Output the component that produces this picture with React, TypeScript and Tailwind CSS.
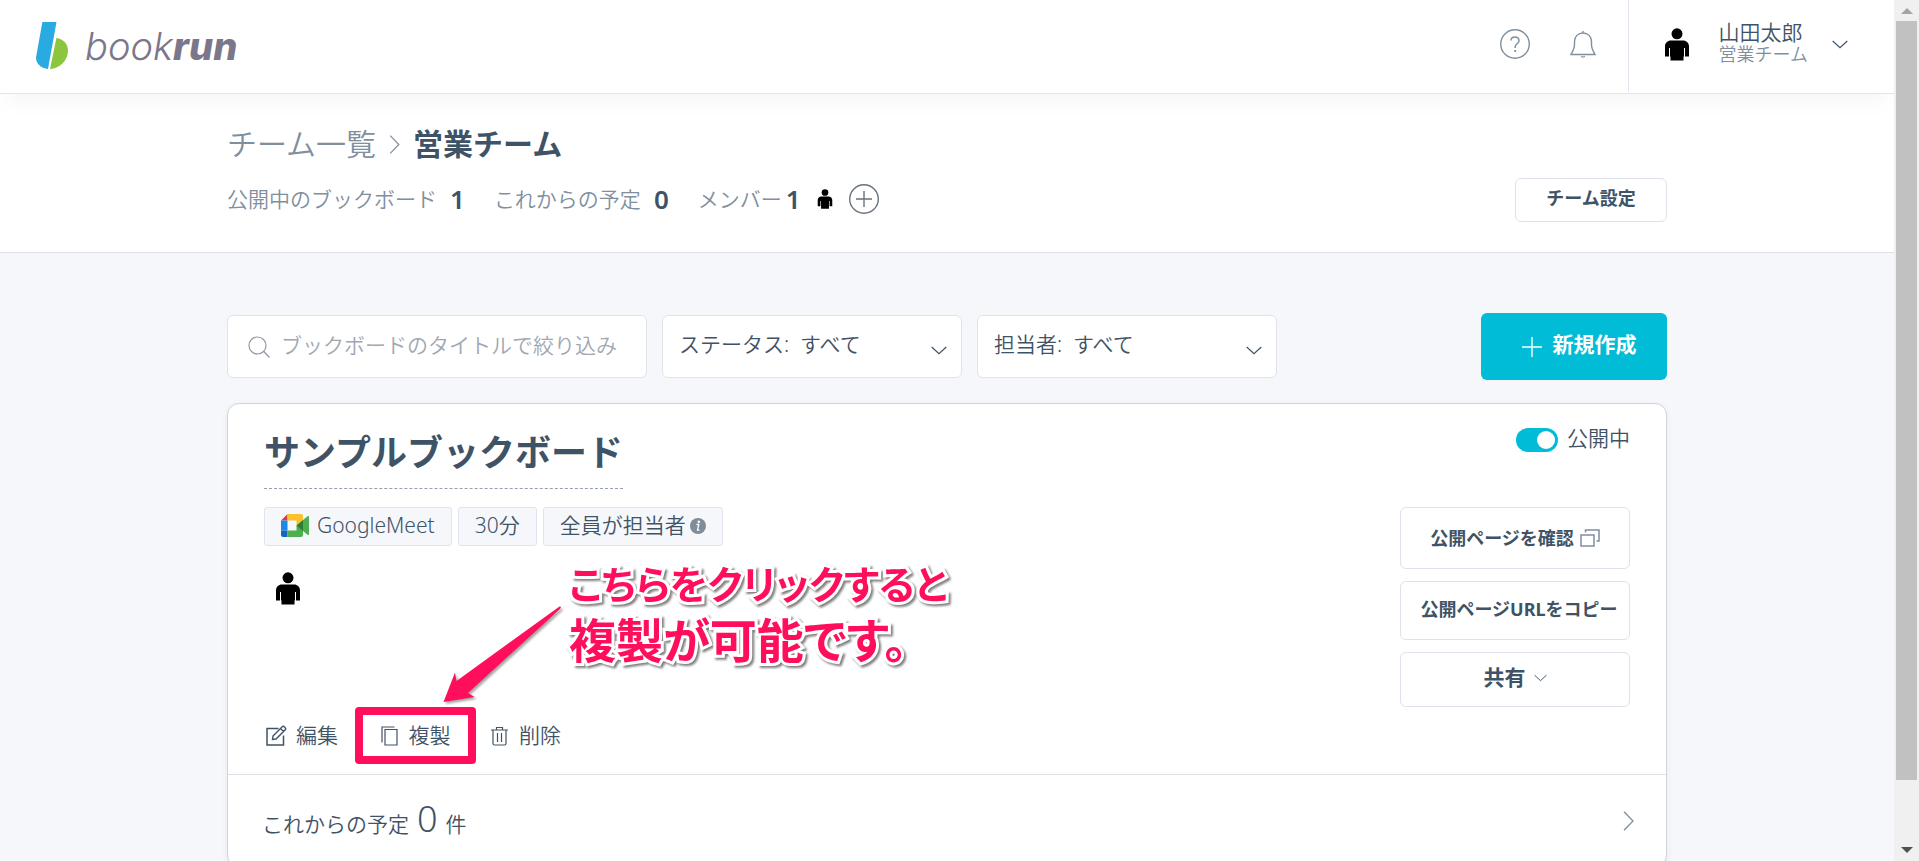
import type { ReactNode } from 'react';

type IconProps = { className?: string };

function Icon({ className = '', viewBox = '0 0 24 24', children }: IconProps & { viewBox?: string; children: ReactNode }) {
  return (
    <svg className={`shrink-0 ${className}`} viewBox={viewBox} fill="none" stroke="currentColor" aria-hidden="true">
      {children}
    </svg>
  );
}

function LogoMark() {
  return (
    <svg className="h-[48px] w-[33px]" viewBox="0 0 33 48" aria-hidden="true">
      <path d="M6.400 0H20.500L12 47C5 46.500 0 41.500 0 35.500Z" fill="#29abe2" />
      <path d="M20.400 16C27.500 17 32 22 32 28.500C32 38.500 24 46.500 14 47Z" fill="#8cc63f" />
    </svg>
  );
}

function PersonIcon({ className = '' }: IconProps) {
  return (
    <svg className={`shrink-0 ${className}`} viewBox="0 0 24 33" fill="#000" aria-hidden="true">
      <circle cx="12" cy="5.800" r="5.500" />
      <path d="M6 12.500H18C21.500 12.500 24 15 24 18.500V28.500H20V20H19V28.500H18.500V32.500H5.500V28.500H5V20H4V28.500H0V18.500C0 15 2.500 12.500 6 12.500Z" />
    </svg>
  );
}

function HelpIcon() {
  return (
    <Icon className="h-[30px] w-[30px]" viewBox="0 0 30 30">
      <circle cx="15" cy="15" r="14.300" strokeWidth="1.400" />
      <path d="M11 11.500C11 9.500 12.700 8 15 8S19 9.500 19 11.800C19 14.800 15.200 14.800 15.200 18V19" strokeWidth="1.500" />
      <path d="M15.200 21V23" strokeWidth="1.800" />
    </Icon>
  );
}

function BellIcon() {
  return (
    <Icon className="h-[28px] w-[26px]" viewBox="0 0 26 28">
      <path d="M13 1V3.500M4.500 15V11.500C4.500 6.500 8 3 13 3S21.500 6.500 21.500 11.500V15C21.500 19 22.800 20 25 24.500H1C3.200 20 4.500 19 4.500 15Z" strokeWidth="1.400" />
      <path d="M11.500 26C11.500 27.500 14.500 27.500 14.500 26" strokeWidth="1.200" />
    </Icon>
  );
}

function ChevronDown({ className = '' }: IconProps) {
  return (
    <Icon className={className} viewBox="0 0 16 9">
      <path d="M0.700 1L8 7.800L15.300 1" strokeWidth="1.200" />
    </Icon>
  );
}

function ChevronRight({ className = '' }: IconProps) {
  return (
    <Icon className={className} viewBox="0 0 11 20">
      <path d="M1 0.700L10 10L1 19.300" strokeWidth="1.300" />
    </Icon>
  );
}

function MeetIcon() {
  return (
    <svg className="h-[23px] w-[28px]" viewBox="0 0 28 23" aria-hidden="true">
      <path d="M0 6.500L6.500 0V6.500Z" fill="#e53935" />
      <path d="M0 6.500H6.500V16.500H0Z" fill="#1e88e5" />
      <path d="M0 16.500H6.500V23H2C1 23 0 22 0 21Z" fill="#1565c0" />
      <path d="M6.500 0H20C21.200 0 22 0.800 22 2V7.500L15.500 12V6.500H6.500Z" fill="#fbc02d" />
      <path d="M6.500 16.500H15.500V11.500L22 15V21C22 22.200 21.200 23 20 23H6.500Z" fill="#4caf50" />
      <path d="M15.500 11.500L22 6V17Z" fill="#2e7d32" />
      <path d="M22 6L26.500 2.300C27.200 1.800 28 2 28 2.800V20.200C28 21 27.200 21.200 26.500 20.700L22 17Z" fill="#4caf50" />
    </svg>
  );
}

function Header() {
  return (
    <header className="relative z-10 flex h-[94px] shrink-0 justify-between border-b border-[#e4e4ee] bg-white shadow-[0_16px_20px_-8px_rgba(0,0,0,0.04)]">
      <a href="#" className="flex items-center gap-4 pb-[2px] pl-9 text-[#7b778a]">
        <LogoMark />
        <span className="font-[Inter,sans-serif] text-[38px] leading-none italic">
          <span className="font-light">book</span>
          <span className="font-extrabold">run</span>
        </span>
      </a>
      <div className="flex h-[92px] text-[#7f8f9e]">
        <div className="flex items-center gap-10 pr-8 pb-1">
          <button type="button" aria-label="ヘルプ">
            <HelpIcon />
          </button>
          <button type="button" aria-label="お知らせ">
            <BellIcon />
          </button>
        </div>
        <button type="button" className="flex items-center gap-[30px] border-l border-[#e4e4ee] pr-[46px] pb-1 pl-9 text-left">
          <PersonIcon className="h-[33px] w-[24px]" />
          <span className="flex items-center gap-6">
            <span className="flex flex-col pb-1">
              <span className="text-[21px] leading-[24px] text-[#3f5366]">山田太郎</span>
              <span className="text-[18px] leading-[20px]">営業チーム</span>
            </span>
            <ChevronDown className="h-[9px] w-[16px] text-[#3f5366]" />
          </span>
        </button>
      </div>
    </header>
  );
}

function TeamHeader() {
  return (
    <section className="h-[159px] shrink-0 border-b border-[#dfe2ea] bg-white">
      <div className="mx-auto flex max-w-[1440px] items-end justify-between pt-[30px]">
        <div className="pb-2">
          <nav className="flex items-center gap-[13px] text-[30px] leading-[40px]">
            <a href="#" className="text-[#7f8f9e]">
              チーム一覧
            </a>
            <ChevronRight className="h-[19px] w-[11px] text-[#7f8f9e]" />
            <h1 className="font-bold">営業チーム</h1>
          </nav>
          <dl className="mt-5 flex items-center text-[21px] leading-[30px] text-[#7f8f9e]">
            <dt>公開中のブックボード</dt>
            <dd className="mr-[29px] ml-[13px] text-[26px] font-semibold text-[#3f5366]">1</dd>
            <dt>これからの予定</dt>
            <dd className="mr-[29px] ml-[13px] text-[26px] font-semibold text-[#3f5366]">0</dd>
            <dt>メンバー</dt>
            <dd className="ml-1 flex items-center gap-4 text-[26px] font-semibold text-[#3f5366]">
              1
              <PersonIcon className="h-[20px] w-[16px]" />
              <button type="button" aria-label="メンバーを追加">
                <Icon className="h-[30px] w-[30px] text-[#66727d]" viewBox="0 0 30 30">
                  <circle cx="15" cy="15" r="14.300" strokeWidth="1.400" />
                  <path d="M7 15H23M15 7V23" strokeWidth="1.400" />
                </Icon>
              </button>
            </dd>
          </dl>
        </div>
        <button type="button" className="h-[44px] w-[152px] rounded-md border border-[#e0e1ea] pb-1 text-[18px] leading-none font-bold">
          チーム設定
        </button>
      </div>
    </section>
  );
}

function FilterSelect({ label, id }: { label: string; id: string }) {
  return (
    <div className="relative w-[300px]">
      <label htmlFor={id} className="sr-only">
        {label}
      </label>
      <select id={id} className="h-[63px] w-full appearance-none rounded-md border border-[#e0e3ea] bg-white pr-10 pb-1 pl-4 text-[21px]">
        <option>{label}:&nbsp; すべて</option>
      </select>
      <ChevronDown className="pointer-events-none absolute top-[31px] right-[15px] h-[9px] w-[16px]" />
    </div>
  );
}

function Filters() {
  return (
    <div className="flex items-center gap-[15px]">
      <div className="relative w-[420px]">
        <Icon className="absolute top-[21px] left-[21px] h-[22px] w-[22px] text-[#8f99a5]" viewBox="0 0 22 22">
          <circle cx="9.500" cy="9.500" r="8.500" strokeWidth="1.200" />
          <path d="M15.800 15.500L21.500 21.500" strokeWidth="1.200" />
        </Icon>
        <label htmlFor="title-filter" className="sr-only">
          タイトル
        </label>
        <input
          id="title-filter"
          type="text"
          placeholder="ブックボードのタイトルで絞り込み"
          className="h-[63px] w-full rounded-md border border-[#e0e3ea] bg-white pr-4 pb-1 pl-[53px] text-[21px] placeholder:text-[#a0a8b2]"
        />
      </div>
      <FilterSelect id="status-filter" label="ステータス" />
      <FilterSelect id="owner-filter" label="担当者" />
      <button type="button" className="ml-auto flex h-[67px] w-[186px] items-center justify-center gap-[11px] rounded-md bg-[#00bcd6] pl-[10px] text-[21px] leading-none font-bold text-white">
        <Icon className="h-[20px] w-[20px]" viewBox="0 0 20 20">
          <path d="M0 10H20M10 0V20" strokeWidth="1.400" />
        </Icon>
        <span className="pb-1">新規作成</span>
      </button>
    </div>
  );
}

function Tag({ children }: { children: ReactNode }) {
  return (
    <li className="flex h-[39px] items-center rounded-[3px] border border-[#e1e4f0] bg-[#f5f7fb] px-4 pb-[2px] text-[21px] leading-none">{children}</li>
  );
}

// Pink callout that points at the duplicate button
function Callout() {
  return (
    <div className="pointer-events-none absolute bottom-full left-full mb-[3px] -ml-[33px]">
      <svg className="h-[98px] w-[120px] drop-shadow-[2px_2px_1px_rgba(0,0,0,0.35)]" viewBox="0 0 120 98" fill="#ff0f5b" aria-hidden="true">
        <path d="M116.500 0.500C118 0 118.500 1.500 117 3L25 87L31.500 91L0.500 96L12 66.500L13.500 75Z" />
      </svg>
      <p className="absolute bottom-[36px] left-[126px] font-bold whitespace-nowrap text-[#ff0f5b] [font-feature-settings:'palt'] [paint-order:stroke_fill] [-webkit-text-stroke:6px_#fff] drop-shadow-[2px_2px_1px_rgba(0,0,0,0.5)]">
        <span className="block text-[39px] leading-[56px]">こちらをクリックすると</span>
        <span className="block text-[47px] leading-[56px]">複製が可能です。</span>
      </p>
    </div>
  );
}

function CardActions() {
  return (
    <div className="flex items-center text-[21px] leading-none">
      <button type="button" className="flex items-center gap-[9px]">
        <Icon className="h-[21px] w-[21px]" viewBox="0 0 21 21">
          <path d="M12.500 3.500H1V20H17.500V10.500" strokeWidth="1.500" />
          <path d="M7 11L16.500 1.500C17.500 0.500 20.500 3.500 19.500 4.500L10 14L6.500 14.500ZM14.500 3.500L17.500 6.500" strokeWidth="1.400" />
        </Icon>
        編集
      </button>
      <div className="relative ml-[17px]">
        <button type="button" className="flex h-[57px] w-[121px] items-center justify-center gap-[11px] rounded-[4px] border-8 border-[#ff0f5b]">
          <Icon className="h-[20px] w-[17px]" viewBox="0 0 17 20">
            <path d="M4 3.500H16V19H4Z" strokeWidth="1.200" />
            <path d="M1 16.500V1H13.500" strokeWidth="1.200" />
          </Icon>
          複製
        </button>
        <Callout />
      </div>
      <button type="button" className="ml-[15px] flex items-center gap-[11px]">
        <Icon className="h-[20px] w-[17px]" viewBox="0 0 17 20">
          <path d="M0 4H17M5.500 4V1.500H11.500V4M2 4V17.500C2 18.500 2.500 19 3.500 19H13.500C14.500 19 15 18.500 15 17.500V4M6.500 7V16M10.500 7V16" strokeWidth="1.200" />
        </Icon>
        削除
      </button>
    </div>
  );
}

function BoardCard() {
  return (
    <article className="rounded-xl border border-[#d0d3da] bg-white shadow-[0_2px_6px_rgba(0,0,0,0.06)]">
      <div className="flex h-[371px] justify-between border-b border-[#dfe1e7] pr-9 pl-9">
        <div className="flex flex-col items-start pt-[24px]">
          <h2 className="border-b border-dashed border-[#94a0ab] pb-[10px] text-[36px] leading-[50px] font-bold">サンプルブックボード</h2>
          <ul className="mt-[18px] flex gap-[6px]">
            <Tag>
              <span className="flex items-center gap-2">
                <MeetIcon />
                GoogleMeet
              </span>
            </Tag>
            <Tag>30分</Tag>
            <Tag>
              全員が担当者
              <svg className="ml-1 h-[16px] w-[16px]" viewBox="0 0 16 16" aria-hidden="true">
                <circle cx="8" cy="8" r="8" fill="#7f8c99" />
                <circle cx="8.800" cy="3.800" r="1.300" fill="#fff" />
                <path d="M6.500 6.500H8.800L7.500 12.200H9.500" fill="none" stroke="#fff" strokeWidth="1.300" />
              </svg>
            </Tag>
          </ul>
          <PersonIcon className="mt-[26px] ml-3 h-[33px] w-[24px]" />
          <div className="mt-auto mb-[10px] ml-[2px]">
            <CardActions />
          </div>
        </div>
        <div className="flex w-[230px] flex-col">
          <label className="mt-[19px] flex items-center justify-end gap-[9px] text-[21px] leading-[30px]">
            <input
              type="checkbox"
              defaultChecked
              className="mt-1 flex h-[24px] w-[42px] appearance-none items-center rounded-full bg-[#00bcd6] px-[3px] before:ml-auto before:h-[18px] before:w-[18px] before:rounded-full before:bg-white"
            />
            公開中
          </label>
          <div className="mt-[54px] flex flex-col gap-3 font-bold">
            <a href="#" className="flex h-[62px] items-center justify-center gap-[6px] rounded-md border border-[#e0e1ea] text-[18px] leading-none">
              公開ページを確認
              <Icon className="h-[18px] w-[20px] text-[#7f8f9e]" viewBox="0 0 20 18">
                <path d="M1 6H14V17H1ZM5.500 3.500V1H19V12H16.500" strokeWidth="1.500" />
              </Icon>
            </a>
            <button type="button" className="h-[59px] rounded-md border border-[#e0e1ea] pb-1 pl-2 text-[18px] leading-none whitespace-nowrap">
              公開ページURLをコピー
            </button>
            <button type="button" className="flex h-[55px] items-center justify-center gap-2 rounded-md border border-[#e0e1ea] pb-1 text-[21px] leading-none">
              共有
              <ChevronDown className="h-[8px] w-[13px]" />
            </button>
          </div>
        </div>
      </div>
      <a href="#" className="flex h-[91px] items-center justify-between pr-8 pl-[34px] text-[21px]">
        <span className="flex items-baseline pb-1 leading-none">
          これからの予定
          <span className="mx-2 text-[36px]">0</span>
          件
        </span>
        <ChevronRight className="h-[20px] w-[11px] text-[#7f8f9e]" />
      </a>
    </article>
  );
}

function Scrollbar() {
  return (
    <div className="flex w-[25px] shrink-0 flex-col items-center justify-between bg-[#f0f0f0] pb-2" aria-hidden="true">
      <div className="flex h-[21px] items-center">
        <svg className="h-[6px] w-[12px]" viewBox="0 0 12 6" fill="#a3a3a3">
          <path d="M0 6L6 0L12 6Z" />
        </svg>
      </div>
      <div className="mb-auto h-[89%] w-[21px] bg-[#c1c1c1]" />
      <svg className="h-[6px] w-[12px]" viewBox="0 0 12 6" fill="#505050">
        <path d="M0 0L6 6L12 0Z" />
      </svg>
    </div>
  );
}

export default function App() {
  return (
    <div className="flex h-screen overflow-hidden bg-[#f5f7fb] font-['Noto_Sans','Noto_Sans_CJK_JP',sans-serif] font-[350] text-[#3f5366]">
      <div className="flex min-w-0 flex-1 flex-col overflow-hidden">
        <Header />
        <TeamHeader />
        <main className="mx-auto w-full max-w-[1440px] pt-[60px]">
          <Filters />
          <div className="mt-[23px]">
            <BoardCard />
          </div>
        </main>
      </div>
      <Scrollbar />
    </div>
  );
}
